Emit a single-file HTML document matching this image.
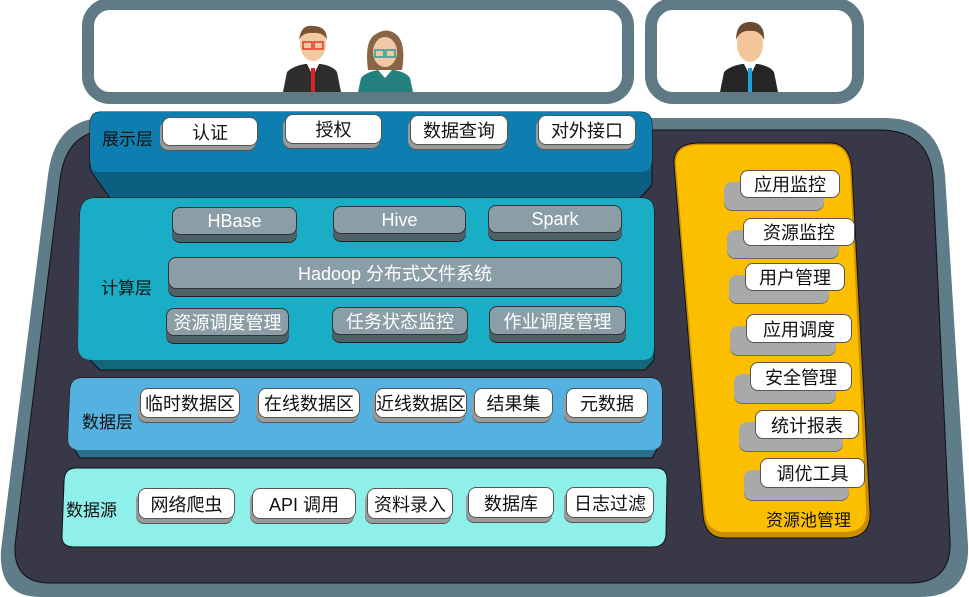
<!DOCTYPE html>
<html><head><meta charset="utf-8"><style>
body{margin:0;width:969px;height:597px;overflow:hidden;background:#fff;position:relative;font-family:"Liberation Sans","Noto Sans CJK SC",sans-serif}
.b,.g,.y{display:flex;align-items:center;justify-content:center}
.b{position:absolute;background:#fff;border:1px solid #555;border-radius:8px;box-sizing:border-box;text-align:center;font-size:18px;color:#111;box-shadow:-2px 4px 0 #9a9a9a,-2px 5px 0 #555}
.g{position:absolute;background:#8b9ea8;border:1px solid #333;border-radius:8px;box-sizing:border-box;text-align:center;font-size:18px;color:#fff;box-shadow:0 7px 0 #4e6068,0 8px 0 #222}
.l{position:absolute;font-size:17px;color:#111}
.y{position:absolute;background:#fff;border:1px solid #555;border-radius:8px;box-sizing:border-box;text-align:center;font-size:18px;color:#111;box-shadow:-16px 12px 0 #a9a9a9,-16px 13px 0 #666}
</style></head><body>
<svg width="969" height="597" style="position:absolute;left:0;top:0">
<rect x="88" y="4" width="540" height="94" rx="22" fill="#fff" stroke="#5f7a85" stroke-width="12"/>
<rect x="651" y="4" width="207" height="94" rx="22" fill="#fff" stroke="#5f7a85" stroke-width="12"/>
<g transform="translate(283,26)">
<ellipse cx="30" cy="18" rx="13" ry="17" fill="#f3c9a0"/><path d="M16 14 Q18 -2 30 0 Q44 0 44 14 Q40 6 30 7 Q20 6 16 14Z" fill="#7a5536"/>
<rect x="20" y="16" width="9" height="7" fill="none" stroke="#e03a2c" stroke-width="1.5"/><rect x="31" y="16" width="9" height="7" fill="none" stroke="#e03a2c" stroke-width="1.5"/>
<path d="M0 66 L4 46 Q10 40 22 38 L38 38 Q50 40 54 46 L58 66Z" fill="#2e2e2e"/><path d="M24 38 L30 50 L36 38Z" fill="#fff"/><rect x="28" y="42" width="4" height="24" fill="#d22"/></g>
<g transform="translate(358,30)">
<path d="M10 40 Q6 10 18 4 Q30 -4 40 6 Q48 16 44 40Z" fill="#8a6446"/><ellipse cx="27" cy="22" rx="12" ry="15" fill="#f2c9a6"/>
<rect x="17" y="20" width="9" height="7" fill="none" stroke="#2a9a9a" stroke-width="1.5"/><rect x="28" y="20" width="9" height="7" fill="none" stroke="#2a9a9a" stroke-width="1.5"/>
<path d="M0 62 L3 48 Q8 42 20 40 L36 40 Q48 42 52 48 L55 62Z" fill="#24807e"/><path d="M20 40 L27 48 L34 40Z" fill="#fff"/></g>
<g transform="translate(720,22)">
<ellipse cx="30" cy="22" rx="13" ry="18" fill="#f4c49a"/><path d="M16 18 Q16 0 30 0 Q45 0 44 18 Q40 8 30 9 Q20 8 16 18Z" fill="#6a4a30"/>
<path d="M0 70 L4 50 Q10 44 22 42 L38 42 Q50 44 54 50 L58 70Z" fill="#262626"/><path d="M24 42 L30 54 L36 42Z" fill="#fff"/><rect x="28" y="46" width="4" height="24" fill="#1fa0df"/></g>
<path d="M105,118 L885,118 Q940,118 945,175 L968,545 Q970,597 920,597 L40,597 Q-2,597 1,550 L48,175 Q55,118 105,118Z" fill="#5f7d88"/>
<path d="M110,130 L880,130 Q930,130 933,180 L950,540 Q952,583 910,583 L50,583 Q13,583 15,545 L60,180 Q66,130 110,130Z" fill="#383848" stroke="#111" stroke-width="1"/>
<path d="M100,112 L640,112 Q652,112 652,125 L652,185 L640,198 L110,198 L90,170 L90,125 Q90,112 100,112Z" fill="#0d5f82" stroke="#111"/>
<path d="M100,112 L640,112 Q652,112 652,125 L652,160 Q652,172 640,172 L100,172 Q90,172 90,160 L90,125 Q90,112 100,112Z" fill="#0e7eb0"/>
<path d="M95,198 L642,198 Q654,198 654,212 L654,360 L645,370 L100,370 L80,350 L80,215 Q80,198 95,198Z" fill="#12687a" stroke="#111"/>
<path d="M95,198 L642,198 Q654,198 654,212 L654,348 Q654,360 642,360 L92,360 Q78,360 78,346 L80,215 Q80,198 95,198Z" fill="#19aec6"/>
<path d="M82,378 L650,378 Q662,378 662,392 L662,440 L652,458 L80,458 L68,440 L70,392 Q70,378 82,378Z" fill="#2d6f8f" stroke="#111"/>
<path d="M82,378 L650,378 Q662,378 662,392 L662,438 Q662,450 650,450 L80,450 Q68,450 68,438 L70,392 Q70,378 82,378Z" fill="#55b1df"/>
<path d="M76,468 L656,468 Q668,468 667,482 L666,535 Q665,547 652,547 L74,547 Q61,547 62,535 L64,482 Q64,468 76,468Z" fill="#8ff0ea" stroke="#111"/>
<path d="M700,143 L830,143 Q850,143 852,170 L870,510 Q872,538 845,538 L725,538 Q705,538 703,515 L674,165 Q672,143 700,143Z" fill="#c98f00" stroke="#111"/>
<path d="M700,145 L830,145 Q848,145 850,170 L866,508 Q868,532 845,532 L725,532 Q707,532 705,512 L676,165 Q674,145 700,145Z" fill="#fcbf00"/>
</svg>
<div class="l" style="left:102px;top:125px">展示层</div>
<div class="b" style="left:162px;top:117px;width:96px;height:29px">认证</div>
<div class="b" style="left:285px;top:114px;width:97px;height:30px">授权</div>
<div class="b" style="left:410px;top:115px;width:98px;height:30px">数据查询</div>
<div class="b" style="left:538px;top:115px;width:98px;height:30px">对外接口</div>
<div class="l" style="left:101px;top:274px">计算层</div>
<div class="g" style="left:172px;top:207px;width:125px;height:28px">HBase</div>
<div class="g" style="left:333px;top:206px;width:133px;height:28px">Hive</div>
<div class="g" style="left:488px;top:205px;width:134px;height:28px">Spark</div>
<div class="g" style="left:168px;top:257px;width:454px;height:32px">Hadoop 分布式文件系统</div>
<div class="g" style="left:166px;top:308px;width:123px;height:28px">资源调度管理</div>
<div class="g" style="left:332px;top:307px;width:136px;height:28px">任务状态监控</div>
<div class="g" style="left:489px;top:306px;width:137px;height:29px">作业调度管理</div>
<div class="l" style="left:82px;top:408px">数据层</div>
<div class="b" style="left:140px;top:388px;width:100px;height:30px">临时数据区</div>
<div class="b" style="left:258px;top:388px;width:102px;height:30px">在线数据区</div>
<div class="b" style="left:375px;top:388px;width:92px;height:30px">近线数据区</div>
<div class="b" style="left:474px;top:388px;width:79px;height:30px">结果集</div>
<div class="b" style="left:566px;top:388px;width:82px;height:30px">元数据</div>
<div class="l" style="left:66px;top:496px">数据源</div>
<div class="b" style="left:138px;top:488px;width:97px;height:31px">网络爬虫</div>
<div class="b" style="left:252px;top:488px;width:104px;height:31px">API 调用</div>
<div class="b" style="left:367px;top:488px;width:86px;height:31px">资料录入</div>
<div class="b" style="left:468px;top:487px;width:86px;height:31px">数据库</div>
<div class="b" style="left:566px;top:487px;width:88px;height:31px">日志过滤</div>
<div class="y" style="left:740px;top:170px;width:100px;height:28px">应用监控</div>
<div class="y" style="left:743px;top:218px;width:112px;height:28px">资源监控</div>
<div class="y" style="left:745px;top:263px;width:100px;height:28px">用户管理</div>
<div class="y" style="left:746px;top:314px;width:106px;height:29px">应用调度</div>
<div class="y" style="left:750px;top:362px;width:102px;height:29px">安全管理</div>
<div class="y" style="left:755px;top:410px;width:104px;height:29px">统计报表</div>
<div class="y" style="left:760px;top:458px;width:105px;height:30px">调优工具</div>
<div class="l" style="left:766px;top:506px">资源池管理</div>
</body></html>
